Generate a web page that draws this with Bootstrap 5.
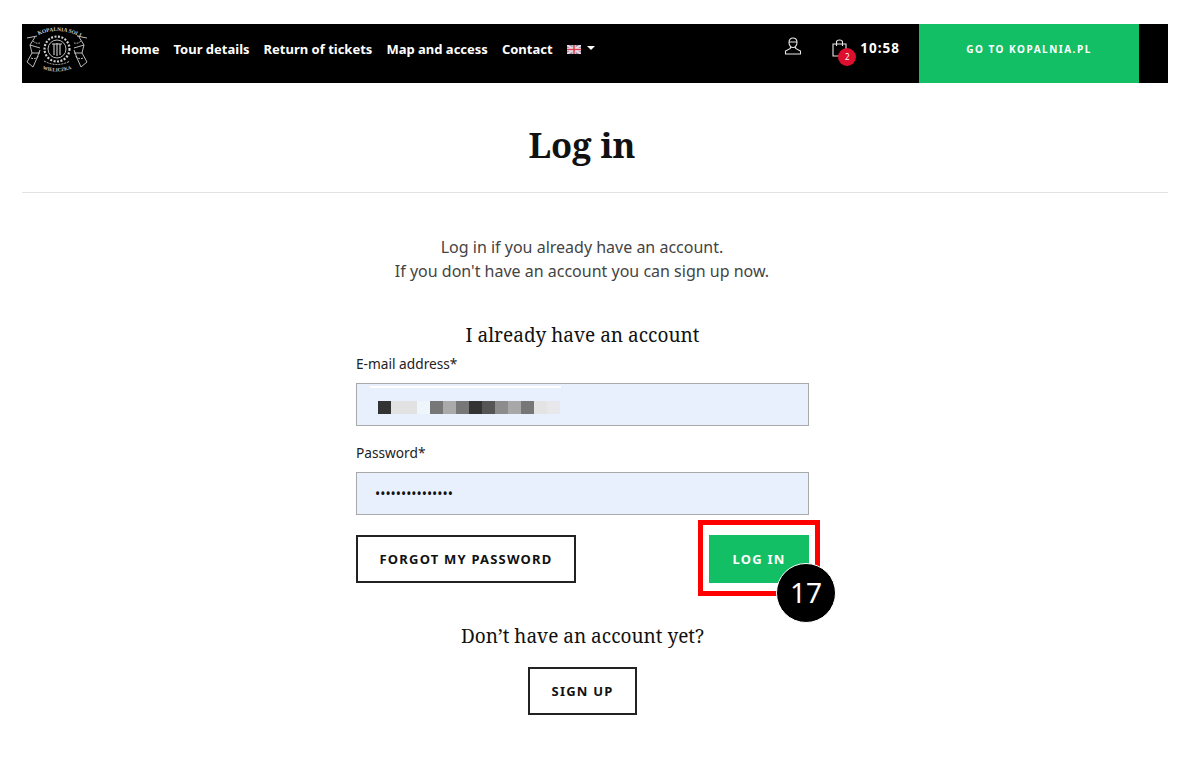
<!DOCTYPE html>
<html lang="en">
<head>
<meta charset="utf-8">
<title>Log in</title>
<link rel="stylesheet" href="https://cdn.jsdelivr.net/npm/bootstrap@5.3.0/dist/css/bootstrap.min.css">
<style>
html,body{height:100%;overflow:hidden}
body{font-family:"Noto Sans",sans-serif;color:#111;background:#fff}
.shell{padding:24px 32px 0 22px}
.topbar{height:59px;background:#000;padding:0;align-items:stretch;flex-wrap:nowrap}
.brandbox{width:99px;padding:1px 0 0 2px;margin:0}
.menu{gap:14px;font-size:13px;font-weight:700;padding-top:16px;align-items:flex-start}
.menu a{color:#fff;text-decoration:none;line-height:18px;white-space:nowrap}
.flag{width:14px;height:9px;display:block;margin:5px 0 0 0}
.caret-down{border-top:4px solid #fff;border-left:4px solid transparent;border-right:4px solid transparent;display:inline-block}
.langbox{display:flex;align-items:flex-start;height:18px}
.langbox .caret-down{margin:6px 0 0 6px}
.tools{margin-left:auto;align-items:flex-start;color:#fff}
.person{margin:13px 0 0 0;width:18px;height:18px;display:block}
.bagwrap{position:relative;margin:15px 0 0 30px;width:18px;height:20px}
.bagwrap svg{display:block}
.bagcount{position:absolute;left:6px;top:9px;width:18px;height:18px;border-radius:50%;background:#dc0f2e;color:#fff;font-size:8px;line-height:18px;text-align:center}
.clock{font-size:13.5px;font-weight:700;letter-spacing:1px;margin:15px 19px 0 10px;line-height:18px}
.gobtn{width:220px;margin-right:29px;align-self:stretch;background:#13bf64;color:#fff;font-size:10px;font-weight:700;letter-spacing:1.5px;display:flex;align-items:center;justify-content:center;text-decoration:none;border:0;border-radius:0;padding:0 0 8px}
.gobtn:hover{background:#13bf64;color:#fff}
.pagetitle{font-family:"Noto Serif","DejaVu Serif",serif;font-weight:700;font-size:34.5px;line-height:46px;text-align:center;margin:39px 0 24px;padding-right:26px;color:#111}
.rule{margin:0;border:0;border-top:1px solid #e2e2e2;opacity:1}
.intro{text-align:center;color:#444;font-size:16px;line-height:24px;margin:42px 0 0;padding-right:26px}
.formcol{width:453px;margin:0 auto 0 334px}
.subhead{font-family:"Noto Serif","DejaVu Serif",serif;font-size:19px;line-height:26px;text-align:center;font-weight:400;margin:0;color:#111}
.first{margin-top:39px;margin-bottom:6px}
.flabel{font-size:13.7px;line-height:20px;margin:0 0 9px;display:block;color:#222}
.fieldbox{position:relative;margin-bottom:17px}
.fieldlast{margin-bottom:20px}
.entry.form-control{height:43px;border-radius:0;border:1px solid #a9a9a9;background:#e8f0fe;font-size:13.8px;padding:0 18px;color:#111;box-shadow:none}
.masked{position:absolute;left:22px;top:18px;display:flex;pointer-events:none}
.masked i{display:block;width:13px;height:13px}
.streak{position:absolute;left:14px;top:3px;width:191px;height:2px;background:#fff;pointer-events:none}
.outline.btn{border:2px solid #222;border-radius:0;background:#fff;color:#111;font-size:13px;font-weight:700;letter-spacing:1.2px;height:48px;display:flex;align-items:center;justify-content:center;padding:1px 0 0}
.forgot{width:220px}
.signup{width:109px}
.loginwrap{position:relative;width:100px}
.loginbtn.btn{width:100px;height:48px;background:#13bf64;border:0;border-radius:0;color:#fff;font-size:13px;font-weight:700;letter-spacing:1.2px;padding:1px 0 0}
.callbox{position:absolute;left:-11px;top:-15px;width:122px;height:76px;border:5px solid #f00;pointer-events:none}
.callnum{position:absolute;left:67px;top:28px;width:60px;height:60px;border-radius:50%;background:#000;border:1px solid #fff;color:#fff;font-size:28px;line-height:57px;text-align:center}
.second{margin-top:40px}
.signrow{margin-top:18px}
</style>
</head>
<body>
<div class="shell">
  <nav class="navbar topbar d-flex">
    <a class="brandbox d-block" href="#" aria-label="Kopalnia Soli Wieliczka">
      <svg width="66" height="56" viewBox="0 0 66 56" fill="none" stroke="#cfcfcf" stroke-width=".9">
        <path id="arc1" d="M9 13Q33 -1 58 13" stroke="none"/>
        <text font-family="Liberation Serif,serif" font-size="5.500" font-weight="700" fill="#cfcfcf" stroke="none"><textPath href="#arc1" startOffset="12%">KOPALNIA SOLI</textPath></text>
        <path id="arc2" d="M14 42Q33 51 52 42" stroke="none"/>
        <text font-family="Liberation Serif,serif" font-size="5" font-weight="700" fill="#cfcfcf" stroke="none"><textPath href="#arc2" startOffset="12%">WIELICZKA</textPath></text>
        <circle cx="33" cy="24" r="9"/><circle cx="33" cy="24" r="12.500" stroke-dasharray="2 1.500" stroke-width="2.200"/>
        <path d="M28 19h10M30 19v11M36 19v11M33 18v13" stroke-width="1.100"/>
        <path d="M3 13l10-2M63 13l-10-2M11 12l-5 8 2 8-5 9 6 5 4-9 3-8M55 12l5 8-2 8 5 9-6 5-4-9-3-8M6 20l10 3M60 20l-10 3M8 28l8 0M58 28l-8 0"/>
        <path d="M9 16q3 3 7 2M57 16q-3 3-7 2M7 33q4 2 8-2M59 33q-4 2-8-2M20 36q13 7 26 0" stroke-dasharray="2 1"/>
      </svg>
    </a>
    <div class="menu d-flex">
      <a href="#">Home</a><a href="#">Tour details</a><a href="#">Return of tickets</a><a href="#">Map and access</a><a href="#">Contact</a>
      <a href="#" class="langbox" aria-label="English">
        <svg class="flag" viewBox="0 0 14 9"><rect width="14" height="9" fill="#8f8fb8"/><path d="M0 0l14 9M14 0L0 9" stroke="#f0d8dc" stroke-width="2"/><path d="M7 0v9M0 4.500h14" stroke="#eee" stroke-width="3"/><path d="M7 0v9M0 4.500h14" stroke="#d9404f" stroke-width="1.600"/></svg>
        <span class="caret-down"></span>
      </a>
    </div>
    <div class="tools d-flex">
      <svg class="person" viewBox="0 0 18 18" fill="none" stroke="#e8e8e8" stroke-width="1.100"><path d="M5 5.500C5 2.500 6.700 1 9 1s4 1.500 4 4.500c0 3-2 5-4 5s-4-2-4-5zM5 5h8M6.500 10l-.2 1.500L1.500 14v3h15v-3l-4.800-2.500-.2-1.500"/></svg>
      <div class="bagwrap">
        <svg width="15" height="18" viewBox="0 0 15 18" fill="none" stroke="#e8e8e8" stroke-width="1.100"><path d="M1 5h13v12H1zM4.500 7V3q0-2 3-2t3 2v4"/></svg>
        <span class="bagcount">2</span>
      </div>
      <span class="clock">10:58</span>
      <a class="btn gobtn" href="#">GO TO KOPALNIA.PL</a>
    </div>
  </nav>

  <h1 class="pagetitle">Log in</h1>
  <hr class="rule">
  <p class="intro">Log in if you already have an account.<br>If you don't have an account you can sign up now.</p>

  <div class="formcol">
    <h2 class="subhead first">I already have an account</h2>
    <form>
      <label class="flabel" for="mail">E-mail address*</label>
      <div class="fieldbox">
        <input id="mail" class="form-control entry" type="text">
        <span class="streak"></span>
        <span class="masked"><i style="background:#333"></i><i style="background:#e2e2e2"></i><i style="background:#e2e2e2"></i><i style="background:#eef5fb"></i><i style="background:#777"></i><i style="background:#aaa"></i><i style="background:#777"></i><i style="background:#333"></i><i style="background:#555"></i><i style="background:#8c8c8c"></i><i style="background:#a8a8a8"></i><i style="background:#777"></i><i style="background:#e4e4e4"></i><i style="background:#e8e8ec"></i></span>
      </div>
      <label class="flabel" for="pw">Password*</label>
      <div class="fieldbox fieldlast">
        <input id="pw" class="form-control entry" type="password" value="abcdefghijklmno">
      </div>
      <div class="d-flex justify-content-between">
        <a href="#" class="btn outline forgot">FORGOT MY PASSWORD</a>
        <div class="loginwrap">
          <button type="button" class="btn loginbtn">LOG IN</button>
          <span class="callbox"></span>
          <span class="callnum">17</span>
        </div>
      </div>
    </form>
    <h2 class="subhead second">Don’t have an account yet?</h2>
    <div class="d-flex justify-content-center signrow"><a href="#" class="btn outline signup">SIGN UP</a></div>
  </div>
</div>
<script src="https://cdn.jsdelivr.net/npm/bootstrap@5.3.0/dist/js/bootstrap.bundle.min.js"></script>
</body>
</html>
